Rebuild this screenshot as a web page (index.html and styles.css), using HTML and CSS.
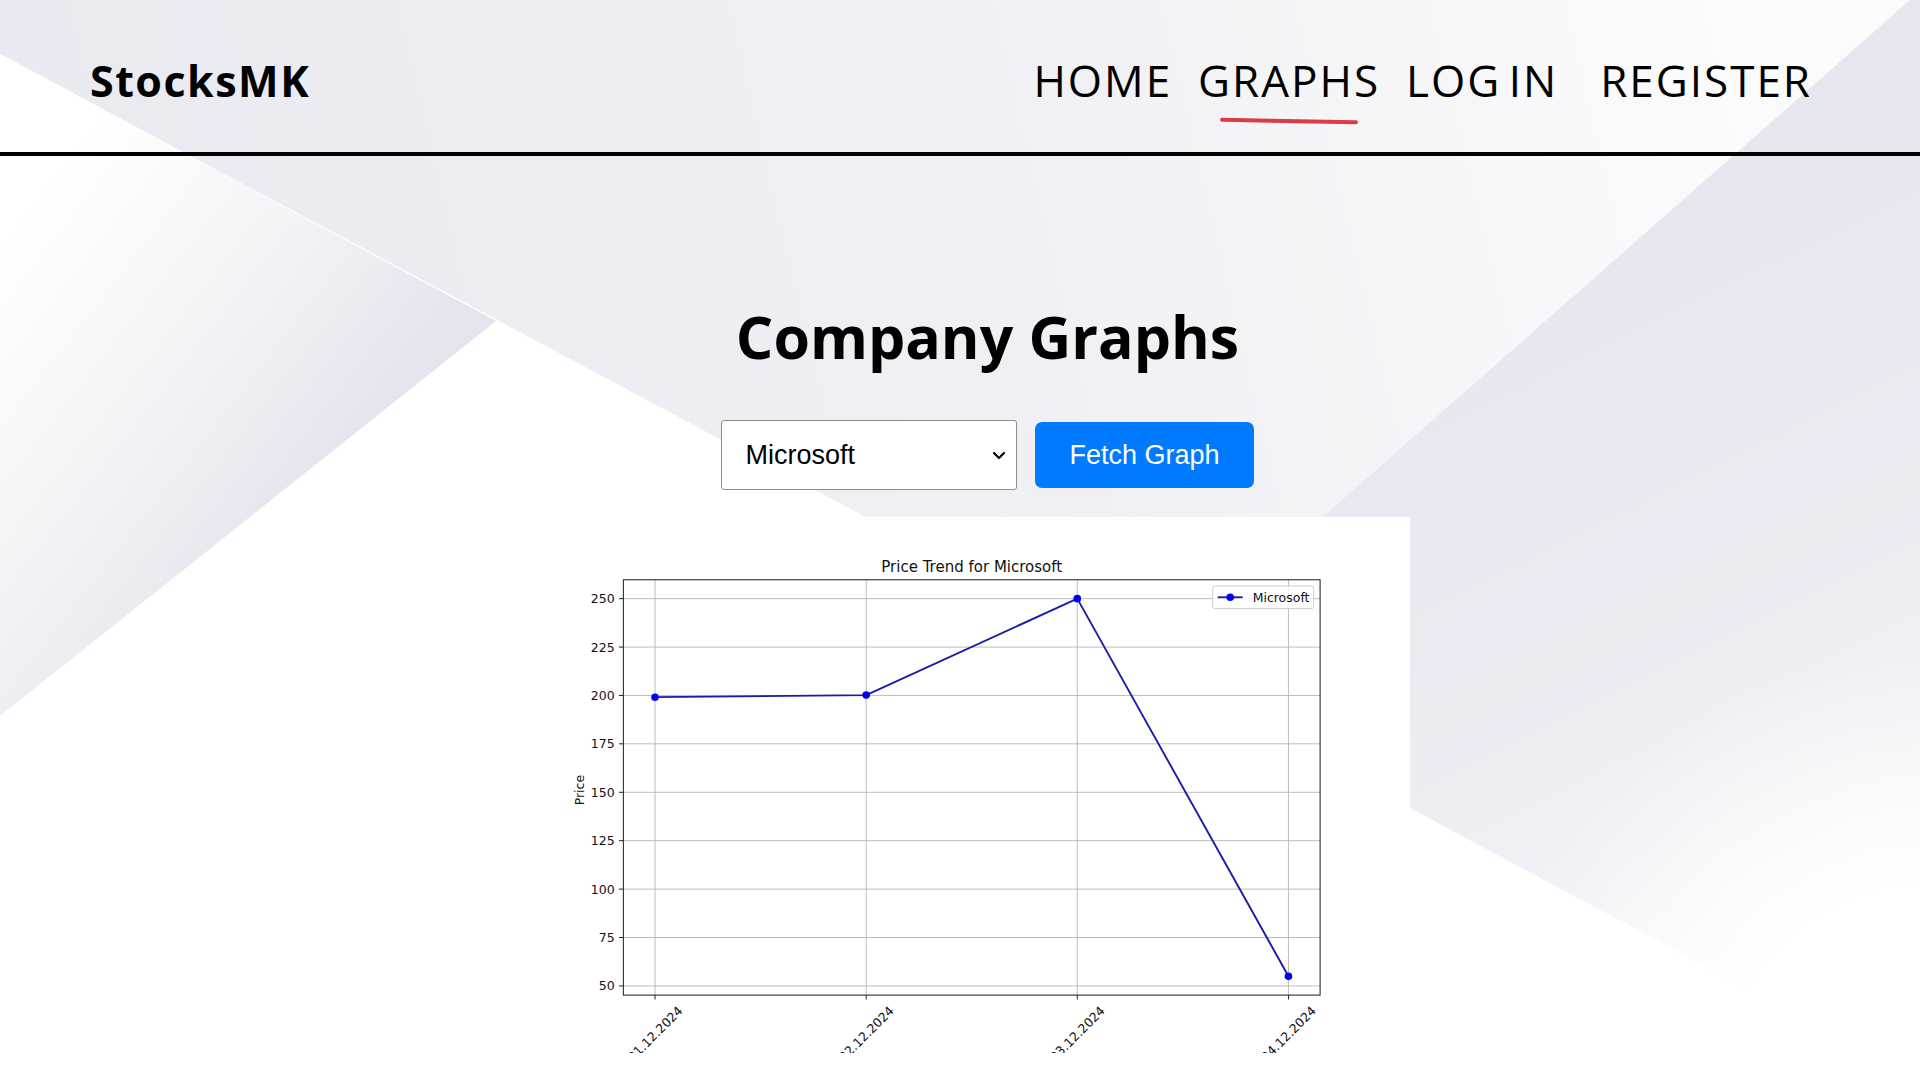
FILE: index.html
```html
<!DOCTYPE html>
<html lang="en">
<head>
<meta charset="utf-8">
<title>StocksMK - Company Graphs</title>
<link rel="stylesheet" href="styles.css">
</head>
<body>
<header class="site-header">
  <a class="logo" href="#">StocksMK</a>
  <nav class="nav">
    <a class="nav-link" href="#">HOME</a>
    <a class="nav-link active" href="#">GRAPHS</a>
    <a class="nav-link nav-link-login" href="#">LOG IN</a>
    <a class="nav-link nav-link-register" href="#">REGISTER</a>
  </nav>
</header>
<main class="content">
  <div class="intro">
    <h1 class="title">Company Graphs</h1>
    <form class="graph-form">
      <select class="company-select">
        <option>Microsoft</option>
        <option>Apple</option>
        <option>Google</option>
      </select>
      <button class="fetch-btn" type="button">Fetch Graph</button>
    </form>
  </div>
  <div class="chart">
    <svg class="chart-svg" viewBox="0 2.2 1000 596.2" preserveAspectRatio="none" xmlns="http://www.w3.org/2000/svg">
      <rect x="0" y="0" width="1000" height="600" fill="#ffffff"/>
      <rect x="125" y="72" width="775" height="462" fill="#ffffff"/>
      <path d="M160.2 72V534M395.1 72V534M629.9 72V534M864.8 72V534M125 93H900M125 146.9H900M125 200.7H900M125 254.5H900M125 308.4H900M125 362.2H900M125 416.1H900M125 469.9H900M125 523.8H900" stroke="#b0b0b0" stroke-opacity="0.85" stroke-width="1.1" fill="none"/>
      <polyline points="160.2,202.6 395.1,200.3 629.9,93 864.8,513" fill="none" stroke="#1c1ca8" stroke-width="2.1" stroke-linejoin="round"/>
      <g fill="#0000f0">
        <circle cx="160.2" cy="202.6" r="4.2"/>
        <circle cx="395.1" cy="200.3" r="4.2"/>
        <circle cx="629.9" cy="93" r="4.2"/>
        <circle cx="864.8" cy="513" r="4.2"/>
      </g>
      <rect x="125" y="72" width="775" height="462" fill="none" stroke="#222" stroke-width="1.15"/>
      <path d="M120.1 93H125M120.1 146.9H125M120.1 200.7H125M120.1 254.5H125M120.1 308.4H125M120.1 362.2H125M120.1 416.1H125M120.1 469.9H125M120.1 523.8H125M160.2 534V538.9M395.1 534V538.9M629.9 534V538.9M864.8 534V538.9" stroke="#222" stroke-width="1.1" fill="none"/>
      <g font-family="'DejaVu Sans', sans-serif" font-size="13.9" fill="#111" text-anchor="end" dominant-baseline="central">
        <text x="115.3" y="93">250</text>
        <text x="115.3" y="146.9">225</text>
        <text x="115.3" y="200.7">200</text>
        <text x="115.3" y="254.5">175</text>
        <text x="115.3" y="308.4">150</text>
        <text x="115.3" y="362.2">125</text>
        <text x="115.3" y="416.1">100</text>
        <text x="115.3" y="469.9">75</text>
        <text x="115.3" y="523.8">50</text>
      </g>
      <g font-family="'DejaVu Sans', sans-serif" font-size="13.9" fill="#111" text-anchor="middle" dominant-baseline="central">
        <text transform="translate(160.2 577) rotate(-45)">01.12.2024</text>
        <text transform="translate(395.1 577) rotate(-45)">02.12.2024</text>
        <text transform="translate(629.9 577) rotate(-45)">03.12.2024</text>
        <text transform="translate(864.8 577) rotate(-45)">04.12.2024</text>
        <text transform="translate(76.5 306) rotate(-90)">Price</text>
      </g>
      <text x="512.5" y="63.7" font-family="'DejaVu Sans', sans-serif" font-size="16.7" fill="#111" text-anchor="middle">Price Trend for Microsoft</text>
      <rect x="780.5" y="78.9" width="112.5" height="25.2" rx="2.8" fill="#ffffff" fill-opacity="0.8" stroke="#cccccc" stroke-width="1.1"/>
      <line x1="786.1" y1="91.5" x2="813.9" y2="91.5" stroke="#1c1ca8" stroke-width="2.1"/>
      <circle cx="800" cy="91.5" r="4.2" fill="#0000f0"/>
      <text x="825" y="91.5" font-family="'DejaVu Sans', sans-serif" font-size="13.9" fill="#111" dominant-baseline="central">Microsoft</text>
    </svg>
  </div>
</main>
</body>
</html>
```

FILE: styles.css
```css
html {
  height: 100%;
  overflow: hidden;
}

body {
  margin: 0;
  min-height: 100%;
  font-family: "Open Sans", "Liberation Sans", sans-serif;
  color: #000;
  background: #ffffff url("data:image/svg+xml,%3Csvg xmlns='http://www.w3.org/2000/svg' width='1920' height='1080' viewBox='0 0 1920 1080'%3E%3Cdefs%3E%3ClinearGradient id='g1' x1='0' y1='400' x2='1700' y2='0' gradientUnits='userSpaceOnUse'%3E%3Cstop offset='0' stop-color='%23e9e9f1'/%3E%3Cstop offset='0.55' stop-color='%23efeff4'/%3E%3Cstop offset='1' stop-color='%23fbfbfc'/%3E%3C/linearGradient%3E%3ClinearGradient id='g2' x1='1450' y1='250' x2='1800' y2='950' gradientUnits='userSpaceOnUse'%3E%3Cstop offset='0' stop-color='%23e6e6ef'/%3E%3Cstop offset='0.6' stop-color='%23ececf3'/%3E%3Cstop offset='1' stop-color='%23f6f6f9'/%3E%3C/linearGradient%3E%3ClinearGradient id='g3' x1='60' y1='170' x2='380' y2='420' gradientUnits='userSpaceOnUse'%3E%3Cstop offset='0' stop-color='%23ffffff'/%3E%3Cstop offset='0.5' stop-color='%23f4f4f7'/%3E%3Cstop offset='1' stop-color='%23e4e4ee'/%3E%3C/linearGradient%3E%3CradialGradient id='g4' cx='1920' cy='1080' r='430' gradientUnits='userSpaceOnUse'%3E%3Cstop offset='0.45' stop-color='%23ffffff'/%3E%3Cstop offset='1' stop-color='%23ffffff' stop-opacity='0'/%3E%3C/radialGradient%3E%3C/defs%3E%3Crect width='1920' height='1080' fill='url(%23g1)'/%3E%3Cpolygon points='1910,0 1920,0 1920,1082 1150,669' fill='url(%23g2)'/%3E%3Cpolygon points='0,54 1922,1082 0,1082' fill='%23ffffff'/%3E%3Cpolygon points='0,54 496,321 0,716' fill='url(%23g3)'/%3E%3Crect width='1920' height='1080' fill='url(%23g4)'/%3E%3C/svg%3E") 0 0 / 1920px 1080px no-repeat;
}

/* ---------- Header ---------- */
.site-header {
  display: flex;
  justify-content: space-between;
  align-items: center;
  height: 156px;
  box-sizing: border-box;
  padding: 8px 108px 0 90px;
  border-bottom: 4px solid #000;
}

.logo {
  font-family: "Open Sans", sans-serif;
  font-weight: 700;
  font-size: 43px;
  letter-spacing: 1.5px;
  color: #000;
  text-decoration: none;
}

.nav {
  display: flex;
  align-items: center;
  gap: 26px;
}

.nav-link {
  font-family: "Open Sans", sans-serif;
  font-weight: 400;
  font-size: 44px;
  letter-spacing: 2px;
  color: #000;
  text-decoration: none;
}

.nav-link-login {
  word-spacing: -6px;
}

.nav-link-register {
  margin-left: 16px;
}

.nav-link.active {
  position: relative;
}

.nav-link.active::after {
  content: "";
  position: absolute;
  left: 22px;
  right: 22px;
  top: calc(100% + 9px);
  height: 4px;
  border-radius: 2px;
  background: #dc3b41;
  transform: rotate(1deg);
}

/* ---------- Main ---------- */
.content {
  display: flex;
  flex-direction: column;
  align-items: center;
  padding-top: 140px;
}

.intro {
  display: flex;
  flex-direction: column;
  align-items: center;
  padding-left: 55px;
}

.title {
  margin: 0;
  font-family: "Open Sans", sans-serif;
  font-weight: 700;
  font-size: 59px;
  color: #000;
}

.graph-form {
  display: flex;
  align-items: center;
  gap: 18px;
  margin-top: 44px;
}

.company-select {
  width: 296px;
  height: 70px;
  box-sizing: border-box;
  padding: 0 40px 0 23px;
  font-family: "Liberation Sans", Arial, sans-serif;
  font-size: 27px;
  color: #000;
  background: #fff url("data:image/svg+xml,%3Csvg xmlns='http://www.w3.org/2000/svg' width='14' height='9' viewBox='0 0 14 9'%3E%3Cpath d='M2 2l5 5 5-5' fill='none' stroke='%23000' stroke-width='2.2' stroke-linecap='round' stroke-linejoin='round'/%3E%3C/svg%3E") right 10px center / 14px 9px no-repeat;
  border: 1px solid #8d8d8d;
  border-radius: 3px;
  appearance: none;
  -webkit-appearance: none;
}

.fetch-btn {
  height: 66px;
  padding: 0 34px;
  font-family: "Liberation Sans", Arial, sans-serif;
  font-size: 27px;
  color: #fff;
  background: #007bff;
  border: none;
  border-radius: 7px;
}

.chart {
  width: 899px;
  height: 536px;
  margin-top: 27px;
  background: #fff;
}

.chart-svg {
  display: block;
  width: 100%;
  height: 100%;
}
```
